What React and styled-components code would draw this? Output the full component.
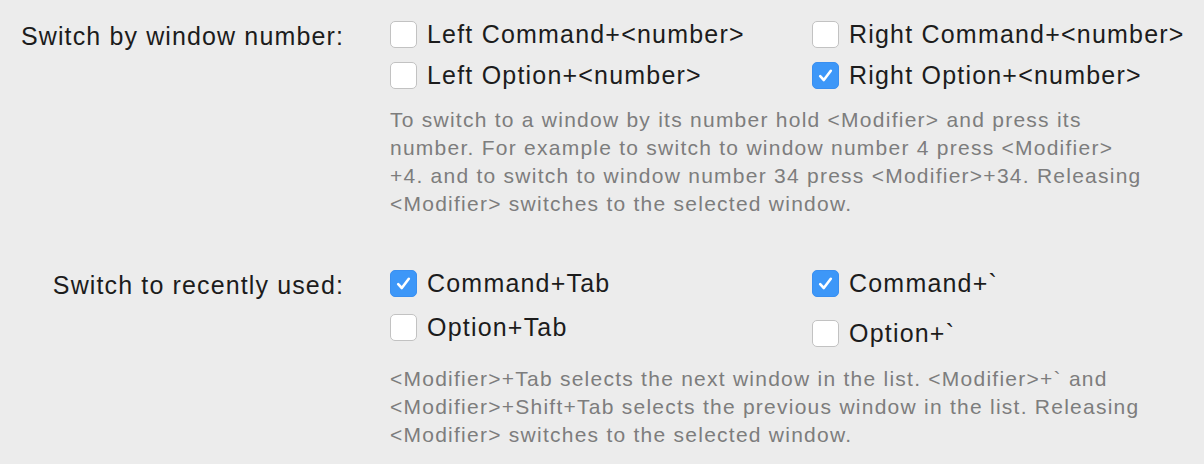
import React from 'react';
import styled, { createGlobalStyle } from 'styled-components';

const GlobalStyle = createGlobalStyle`
  html, body {
    margin: 0;
    padding: 0;
    background: #ececec;
  }
  body {
    font-family: "Liberation Sans", Arial, sans-serif;
    color: #1c1c1c;
  }
`;

const Page = styled.div`
  width: 1204px;
  height: 464px;
  padding-top: 21px;
  box-sizing: border-box;
  overflow: hidden;
`;

const Section = styled.div`
  display: grid;
  grid-template-columns: 343px 1fr;
  column-gap: 47px;
  margin-bottom: ${p => p.gap || 0}px;
`;

const Label = styled.div`
  text-align: right;
  font-size: 25px;
  line-height: 27px;
  letter-spacing: 1.13px;
  margin-top: 2px;
  margin-right: -1px;
  white-space: nowrap;
`;

const Options = styled.div`
  display: grid;
  grid-template-columns: 422px auto;
  row-gap: ${p => p.rowGap}px;
  align-items: start;
`;

const Option = styled.label`
  display: flex;
  align-items: center;
  gap: 10px;
  font-size: 25px;
  line-height: 27px;
  letter-spacing: 1.2px;
  white-space: nowrap;
  margin-top: ${p => p.shift || 0}px;
`;

const Box = styled.span`
  width: 27px;
  height: 27px;
  box-sizing: border-box;
  border-radius: 5px;
  flex: none;
  display: flex;
  align-items: center;
  justify-content: center;
  background: ${p => (p.checked ? '#3d97f8' : '#ffffff')};
  border: 1px solid ${p => (p.checked ? '#3a8ff0' : '#c2c2c2')};
`;

const Description = styled.p`
  grid-column: 2;
  margin: ${p => p.top}px 0 0 0;
  font-size: 21px;
  line-height: 28px;
  letter-spacing: 1.25px;
  color: #7d7d7d;
  width: 800px;
  white-space: nowrap;
`;

const Check = () => (
  <svg width="17" height="17" viewBox="0 0 17 17">
    <path d="M3.2 9.2 L6.8 13 L13.8 3.8" fill="none" stroke="#fff" strokeWidth="2.6" strokeLinecap="round" strokeLinejoin="round" />
  </svg>
);

const Checkbox = ({ checked, children, shift }) => (
  <Option shift={shift}>
    <Box checked={checked}>{checked && <Check />}</Box>
    {children}
  </Option>
);

export default function App() {
  return (
    <Page>
      <GlobalStyle />
      <Section gap={52}>
        <Label>Switch by window number:</Label>
        <Options rowGap={14}>
          <Checkbox>Left Command+&lt;number&gt;</Checkbox>
          <Checkbox>Right Command+&lt;number&gt;</Checkbox>
          <Checkbox>Left Option+&lt;number&gt;</Checkbox>
          <Checkbox checked>Right Option+&lt;number&gt;</Checkbox>
        </Options>
        <Description top={17}>
          To switch to a window by its number hold &lt;Modifier&gt; and press its<br />
          number. For example to switch to window number 4 press &lt;Modifier&gt;<br />
          +4. and to switch to window number 34 press &lt;Modifier&gt;+34. Releasing<br />
          &lt;Modifier&gt; switches to the selected window.
        </Description>
      </Section>
      <Section>
        <Label>Switch to recently used:</Label>
        <Options rowGap={17}>
          <Checkbox checked>Command+Tab</Checkbox>
          <Checkbox checked>Command+`</Checkbox>
          <Checkbox>Option+Tab</Checkbox>
          <Checkbox shift={6}>Option+`</Checkbox>
        </Options>
        <Description top={18}>
          &lt;Modifier&gt;+Tab selects the next window in the list. &lt;Modifier&gt;+` and<br />
          &lt;Modifier&gt;+Shift+Tab selects the previous window in the list. Releasing<br />
          &lt;Modifier&gt; switches to the selected window.
        </Description>
      </Section>
    </Page>
  );
}
